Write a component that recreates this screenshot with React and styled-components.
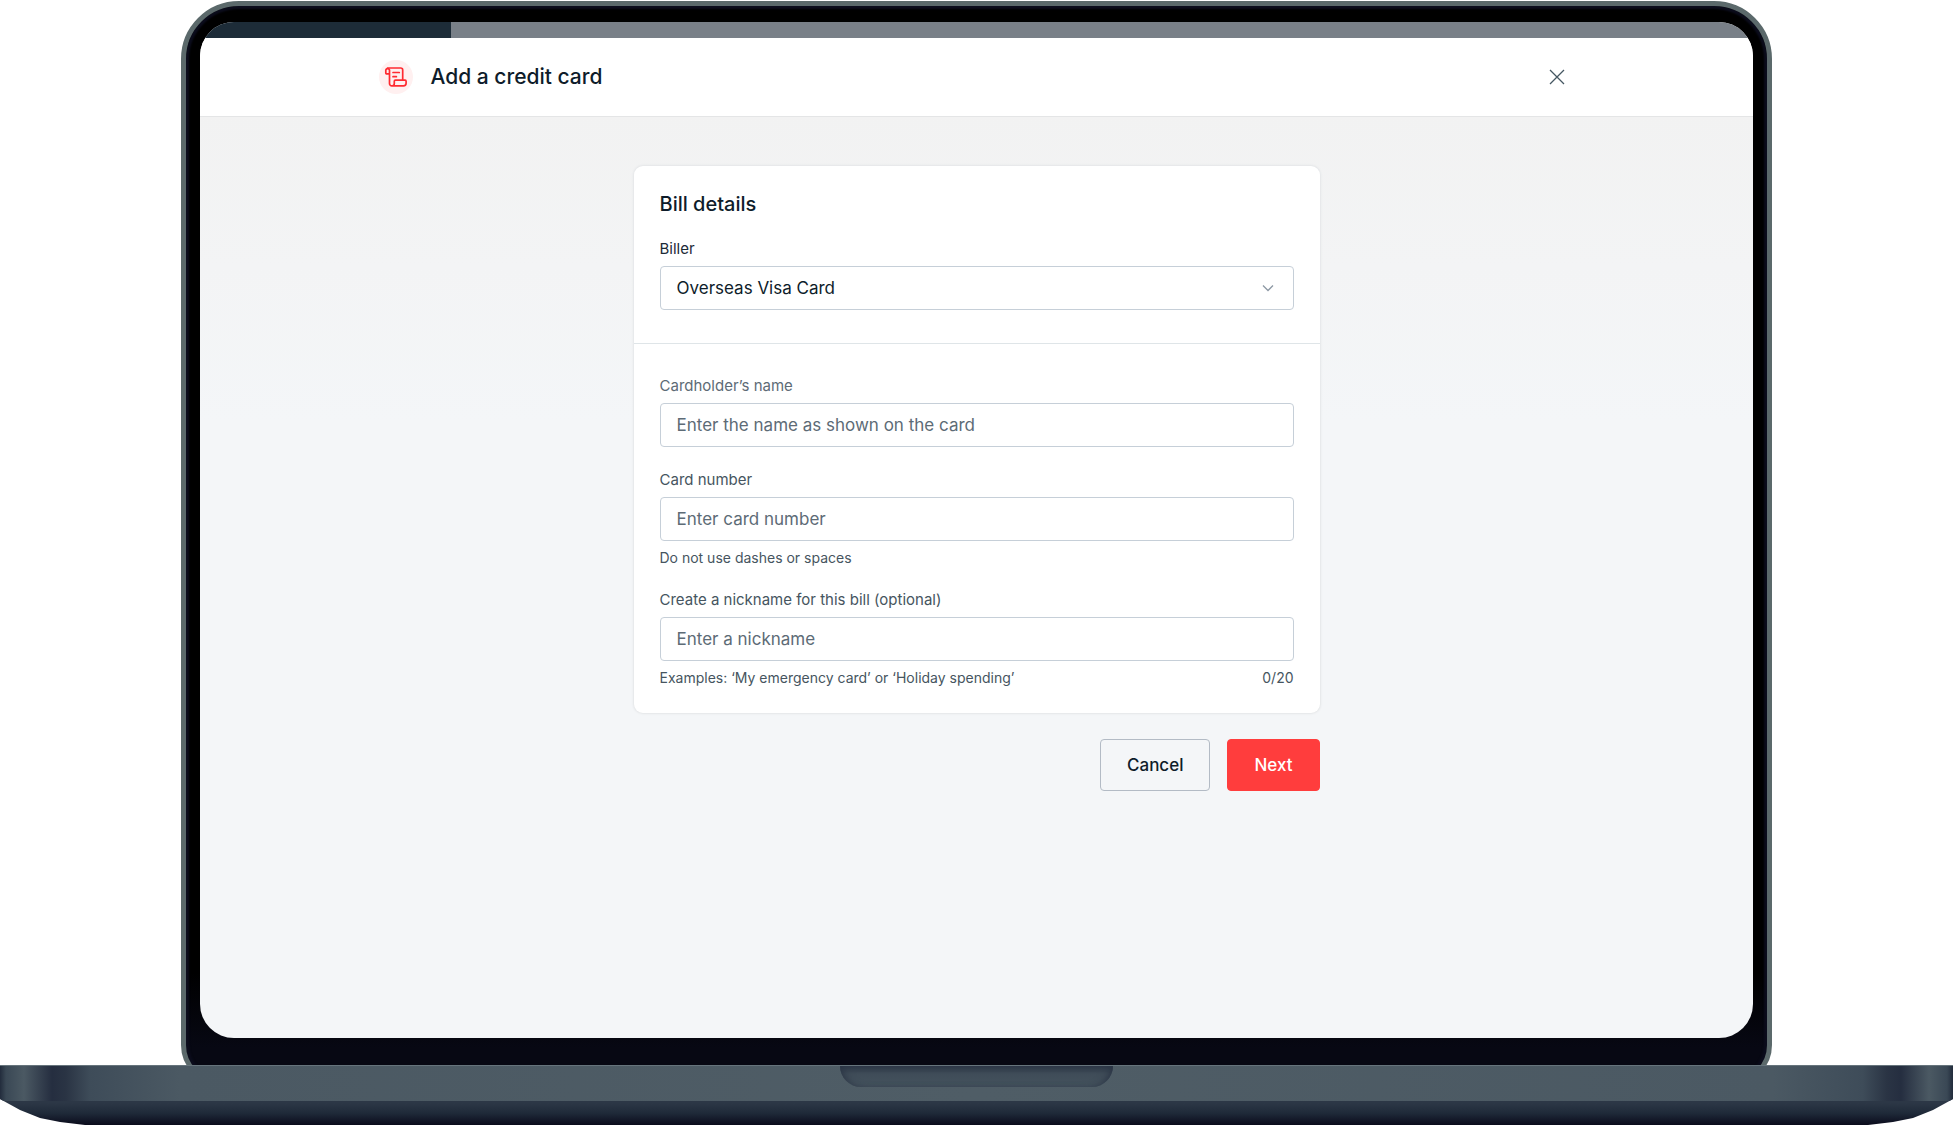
import React, { useState } from 'react';
import styled, { createGlobalStyle } from 'styled-components';

const GlobalStyle = createGlobalStyle`
  *, *::before, *::after { box-sizing: border-box; }
  body {
    margin: 0;
    background: #fff;
    color: #0e1c2a;
    font-family: Inter, 'Liberation Sans', sans-serif;
  }
  button, input, select { font: inherit; color: inherit; }
`;

const Laptop = styled.div`
  display: flex;
  flex-direction: column;
  min-height: 100vh;
  padding-top: 1px;
`;

const Lid = styled.div`
  display: flex;
  flex: 1;
  margin: 0 9.25% -20px;
  padding: 16px 14px 42px;
  border: 5px solid #5b696b;
  border-radius: 58px 58px 40px 40px;
  background: linear-gradient(#000 90%, #070813 97%);
  box-shadow: inset 0 0 2px 3px #0b0c1c;
`;

const Screen = styled.div`
  display: flex;
  flex: 1;
  flex-direction: column;
  overflow: hidden;
  border-radius: 34px;
  background: linear-gradient(#f2f2f2 90px, #f4f6f8 400px);
`;

const Progress = styled.div`
  height: 16px;
  background: #798088;
`;

const ProgressBar = styled.div`
  height: 100%;
  background: #1d2c38;
`;

const Header = styled.header`
  padding: 22px 24px;
  background: #fff;
  border-bottom: 1px solid #e4e5e6;
`;

const HeaderInner = styled.div`
  display: flex;
  align-items: center;
  max-width: 1196px;
  margin: 0 auto;
`;

const IconCircle = styled.span`
  display: flex;
  align-items: center;
  justify-content: center;
  width: 34px;
  height: 34px;
  border-radius: 50%;
  background: #fff0f0;
`;

const Title = styled.h1`
  flex: 1;
  margin: 0 0 0 18px;
  font-size: 21px;
  font-weight: 500;
  line-height: 34px;
`;

const CloseButton = styled.button`
  display: flex;
  align-items: center;
  justify-content: center;
  width: 36px;
  height: 34px;
  padding: 0;
  border: 0;
  background: none;
`;

const Main = styled.main`
  width: 100%;
  max-width: 686px;
  margin: 0 auto;
  padding: 49px 0;
`;

const Card = styled.div`
  border-radius: 9px;
  background: #fff;
  box-shadow: 0 0 2px 1px #e4e6e8;
`;

const Section = styled.section`
  padding: ${props => (props.$first ? '25px 26px 33px' : '33px 26px 26px')};
  border-top: ${props => (props.$first ? '0' : '1px solid #dfe5e8')};
`;

const SectionTitle = styled.h2`
  margin: 0 0 23px;
  font-size: 20px;
  font-weight: 500;
  line-height: 26px;
`;

const FieldGroup = styled.div`
  display: flex;
  flex-direction: column;
  gap: 8px;

  & + & { margin-top: 24px; }
`;

const Label = styled.label`
  color: ${props => props.$color || '#465560'};
  font-size: 15px;
  line-height: 18px;
`;

const Input = styled.input`
  width: 100%;
  height: 44px;
  padding: 0 16px;
  border: 1px solid #c6cfd8;
  border-radius: 4px;
  background: #fff;
  font-size: 17px;

  &::placeholder { color: #5d6b76; opacity: 1; }
`;

const SelectWrap = styled.div`
  position: relative;

  svg {
    position: absolute;
    top: 18px;
    right: 20px;
    pointer-events: none;
  }
`;

const Select = styled(Input).attrs({ as: 'select' })`
  display: block;
  appearance: none;
`;

const Hint = styled.div`
  display: flex;
  justify-content: space-between;
  color: #465560;
  font-size: 14px;
  line-height: 18px;
`;

const Actions = styled.div`
  display: flex;
  justify-content: flex-end;
  gap: 17px;
  margin-top: 26px;
`;

const Button = styled.button`
  height: 52px;
  padding: 0 26px;
  border: 1px solid ${props => (props.$primary ? '#ff3d3d' : '#b3bbc5')};
  border-radius: 4px;
  background: ${props => (props.$primary ? '#ff3d3d' : 'transparent')};
  color: ${props => (props.$primary ? '#fff' : '#0e1c2a')};
  font-size: 17px;
  font-weight: 500;
`;

const Base = styled.div`
  position: relative;
  height: 60px;
  clip-path: polygon(
    0 0, 100% 0, 100% 34px,
    calc(100% - 20px) 45px, calc(100% - 40px) 53px, calc(100% - 60px) 57px, calc(100% - 85px) 60px,
    85px 60px, 60px 57px, 40px 53px, 20px 45px, 0 34px
  );
  background: linear-gradient(#2c3746 38px, #1f2a39 48px, #0a0b1b 60px);
`;

const Deck = styled.div`
  display: flex;
  justify-content: center;
  height: 36px;
  border-top: 1px solid #66747c;
  background: linear-gradient(
    90deg,
    #222c3c 0, #3a4855 6px, #4b5963 24px, #252e40 52px, #2a3444 66px, #3e4c59 90px, #4b5963 180px,
    #4f5d66 50%,
    #4b5963 calc(100% - 180px), #3e4c59 calc(100% - 90px), #2a3444 calc(100% - 66px),
    #252e40 calc(100% - 52px), #4b5963 calc(100% - 24px), #3a4855 calc(100% - 6px), #222c3c 100%
  );
`;

const Notch = styled.div`
  width: 273px;
  height: 21px;
  border-radius: 0 0 21px 21px;
  background: linear-gradient(#2f3a49, #3f4c58 8px, #45535e);
  box-shadow: inset 6px 0 8px -4px #2b3545, inset -6px 0 8px -4px #2b3545;
`;

const ScrollIcon = () => (
  <svg width="24" height="24" viewBox="0 0 24 24" fill="none" stroke="#ff2a30" strokeWidth="1.7" strokeLinecap="round" strokeLinejoin="round" aria-hidden="true">
    <path d="M3.500 3h13.200a2 2 0 0 1 2 2v9.800" />
    <path d="M5.500 8.800H2.700a.9.900 0 0 1-.9-.9V5a1.900 1.900 0 0 1 3.700 0v13.600a2.300 2.300 0 0 0 2.300 2.300h11.700a2.600 2.600 0 0 0 2.600-2.600v-2.100a1 1 0 0 0-1-1H11.300a1 1 0 0 0-1 1v2.300a2.400 2.400 0 0 1-2.400 2.400" />
    <path d="M9 7.500h6.300M9 11.700h3.400" />
  </svg>
);

const CloseIcon = () => (
  <svg width="16" height="16" viewBox="0 0 16 16" fill="none" stroke="#455762" strokeWidth="1.3" aria-hidden="true">
    <path d="M1 1l14 14M15 1L1 15" />
  </svg>
);

const Chevron = () => (
  <svg width="12" height="8" viewBox="0 0 12 8" fill="none" stroke="#8d98a4" strokeWidth="1.3" aria-hidden="true">
    <path d="M1 1.500l5 5 5-5" />
  </svg>
);

const MAX_NICKNAME = 20;

const App = () => {
  const [nickname, setNickname] = useState('');

  return (
    <Laptop>
      <GlobalStyle />
      <Lid>
        <Screen>
          <Progress>
            <ProgressBar style={{ width: '16.2%' }} />
          </Progress>
          <Header>
            <HeaderInner>
              <IconCircle><ScrollIcon /></IconCircle>
              <Title>Add a credit card</Title>
              <CloseButton type="button" aria-label="Close"><CloseIcon /></CloseButton>
            </HeaderInner>
          </Header>
          <Main>
            <form onSubmit={e => e.preventDefault()}>
              <Card>
                <Section $first>
                  <SectionTitle>Bill details</SectionTitle>
                  <FieldGroup>
                    <Label htmlFor="biller" $color="#1c2a37">Biller</Label>
                    <SelectWrap>
                      <Select id="biller">
                        <option>Overseas Visa Card</option>
                      </Select>
                      <Chevron />
                    </SelectWrap>
                  </FieldGroup>
                </Section>
                <Section>
                  <FieldGroup>
                    <Label htmlFor="name" $color="#5d6b76">Cardholder’s name</Label>
                    <Input id="name" placeholder="Enter the name as shown on the card" />
                  </FieldGroup>
                  <FieldGroup>
                    <Label htmlFor="number">Card number</Label>
                    <Input id="number" inputMode="numeric" placeholder="Enter card number" />
                    <Hint>Do not use dashes or spaces</Hint>
                  </FieldGroup>
                  <FieldGroup>
                    <Label htmlFor="nickname">Create a nickname for this bill (optional)</Label>
                    <Input
                      id="nickname"
                      placeholder="Enter a nickname"
                      maxLength={MAX_NICKNAME}
                      value={nickname}
                      onChange={e => setNickname(e.target.value)}
                    />
                    <Hint>
                      <span>Examples: ‘My emergency card’ or ‘Holiday spending’</span>
                      <span>{`${nickname.length}/${MAX_NICKNAME}`}</span>
                    </Hint>
                  </FieldGroup>
                </Section>
              </Card>
              <Actions>
                <Button type="button">Cancel</Button>
                <Button type="submit" $primary>Next</Button>
              </Actions>
            </form>
          </Main>
        </Screen>
      </Lid>
      <Base>
        <Deck><Notch /></Deck>
      </Base>
    </Laptop>
  );
};

export default App;
